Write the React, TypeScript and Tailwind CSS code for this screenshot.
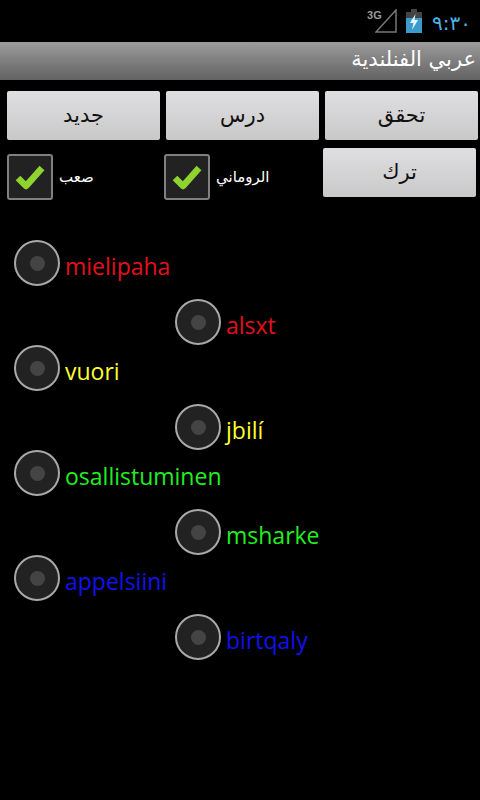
const font = { arabic: "font-['DejaVu_Sans','Noto_Sans',sans-serif]", latin: "font-['Open_Sans','Noto_Sans',sans-serif]" };

const words = [
  { left: "mielipaha", right: "alsxt", color: "text-[#e3101c]" },
  { left: "vuori", right: "jbilí", color: "text-[#ffff33]" },
  { left: "osallistuminen", right: "msharke", color: "text-[#22ee22]" },
  { left: "appelsiini", right: "birtqaly", color: "text-[#1111ee]" },
];

function Radio() {
  return (
    <span className="w-[46px] h-[46px] rounded-full border-2 border-[#a9a9a9] bg-[#222222] flex items-center justify-center shrink-0">
      <span className="w-[15px] h-[15px] rounded-full bg-[#444444]" />
    </span>
  );
}

function WordOption({ text, color, className }: { text: string; color: string; className: string }) {
  return (
    <div className={`flex items-start gap-[5px] h-[46px] ${className}`}>
      <Radio />
      <span className={`${font.latin} ${color} text-[23px] leading-[30px] mt-[11px] whitespace-nowrap`}>{text}</span>
    </div>
  );
}

function GrayButton({ label, className = "" }: { label: string; className?: string }) {
  return (
    <button className={`${font.arabic} w-[153px] h-[49px] rounded-[2px] bg-gradient-to-b from-[#dfdee0] to-[#c9c9ca] text-[#111] text-[21px] flex items-center justify-center ${className}`}>
      {label}
    </button>
  );
}

function Check({ label }: { label: string }) {
  return (
    <div className="flex items-center gap-[6px]">
      <span className="w-[46px] h-[46px] rounded-[3px] border-2 border-[#808080] bg-[#222222] flex items-center justify-center">
        <svg width="30" height="26" viewBox="0 0 30 26">
          <path d="M3 14 L11 22 L27 4" fill="none" stroke="#8fd32f" strokeWidth="6.5" strokeLinejoin="round" />
        </svg>
      </span>
      <span className={`${font.arabic} text-white text-[15px]`}>{label}</span>
    </div>
  );
}

export default function App() {
  return (
    <div className="w-[480px] h-[800px] bg-black overflow-hidden">
      {/* status bar */}
      <div className="h-[42px] flex items-center justify-end pr-[9px]">
        <div className="relative w-[22px] h-[24px] mr-[9px]">
          <svg width="22" height="24" viewBox="0 0 22 24" className="absolute left-0 top-0">
            <path d="M1 23 L21 1 V23 Z" fill="none" stroke="#777" strokeWidth="1.5" />
          </svg>
          <span className="absolute left-[-8px] top-0 text-[11px] leading-[12px] font-bold text-[#999] font-['Liberation_Sans',sans-serif]">3G</span>
        </div>
        <svg width="16" height="24" viewBox="0 0 16 24" className="mr-[10px]">
          <rect x="5" y="0" width="6" height="3" fill="#444" />
          <rect x="0" y="3" width="16" height="21" fill="#444" />
          <rect x="0" y="9" width="16" height="15" fill="#3b9ccc" />
          <path d="M9.5 5 L4 14 H7.5 L6 21 L12 11 H8.5 Z" fill="#e8f6ff" />
        </svg>
        <span className={`${font.arabic} text-[#4fb3e8] text-[20px] leading-none mt-[3px]`}>٩:٣٠</span>
      </div>

      {/* title bar */}
      <div className="h-[38px] bg-gradient-to-b from-[#9c9c9c] to-[#636363] flex items-start justify-end pr-[4px]">
        <span dir="rtl" className={`${font.arabic} text-white text-[21px] leading-[34px] font-normal`}>عربي الفنلندية</span>
      </div>

      {/* actions */}
      <div className="flex gap-[6px] pl-[7px] pt-[11px]">
        <GrayButton label="جديد" />
        <GrayButton label="درس" />
        <GrayButton label="تحقق" />
      </div>

      <div className="flex pl-[7px] pt-[8px] h-[100px] items-start">
        <div className="w-[157px] pt-[6px]"><Check label="صعب" /></div>
        <div className="w-[159px] pt-[6px]"><Check label="الروماني" /></div>
        <GrayButton label="ترك" />
      </div>

      {/* word options */}
      <div className="flex flex-col">
        {words.map((w) => (
          <div key={w.left} className="flex flex-col">
            <WordOption text={w.left} color={w.color} className="pl-[14px]" />
            <WordOption text={w.right} color={w.color} className="pl-[175px] mt-[13px]" />
          </div>
        ))}
      </div>
    </div>
  );
}
